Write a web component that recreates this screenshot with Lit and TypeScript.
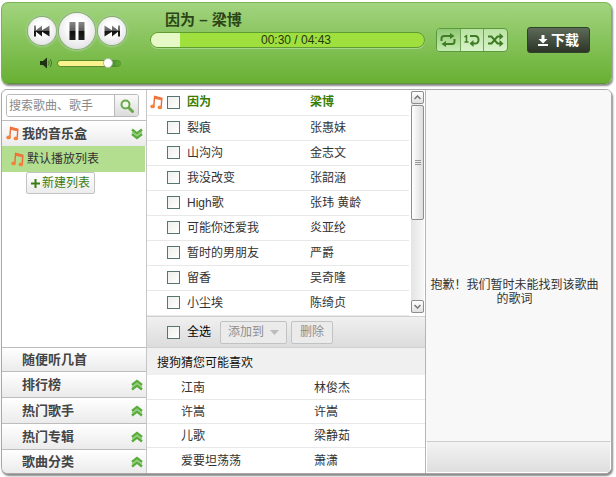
import { LitElement, html, svg, css } from "lit";
import { customElement, state } from "lit/decorators.js";
import { classMap } from "lit/directives/class-map.js";
import { styleMap } from "lit/directives/style-map.js";

interface Song {
  title: string;
  artist: string;
}

const SONGS: Song[] = [
  { title: "因为", artist: "梁博" },
  { title: "裂痕", artist: "张惠妹" },
  { title: "山沟沟", artist: "金志文" },
  { title: "我没改变", artist: "张韶涵" },
  { title: "High歌", artist: "张玮 黄龄" },
  { title: "可能你还爱我", artist: "炎亚纶" },
  { title: "暂时的男朋友", artist: "严爵" },
  { title: "留香", artist: "吴奇隆" },
  { title: "小尘埃", artist: "陈绮贞" },
];

const SUGGESTED: Song[] = [
  { title: "江南", artist: "林俊杰" },
  { title: "许嵩", artist: "许嵩" },
  { title: "儿歌", artist: "梁静茹" },
  { title: "爱要坦荡荡", artist: "萧潇" },
];

const CHANNELS = ["排行榜", "热门歌手", "热门专辑", "歌曲分类"];

const noteIcon = html`<svg class="note" width="14" height="15" viewBox="0 0 14 15" aria-hidden="true">
  <path d="M3.8 11.4 L4.6 1.5 L11.8 3.4 L11.2 12" fill="none" stroke="#ee6a34" stroke-width="1.4" />
  <path d="M4.4 1.2 L12.3 3.2 L12.1 5.6 L4.3 3.7 Z" fill="#f0753f" />
  <ellipse cx="2.6" cy="11.4" rx="2.3" ry="1.9" fill="#f4823f" />
  <ellipse cx="9.9" cy="12.4" rx="2.3" ry="1.9" fill="#f4823f" />
</svg>`;

const chevrons = (down: boolean) => html`<svg class="chevrons" width="12" height="12" viewBox="0 0 12 12" aria-hidden="true">
  ${down
    ? svg`<path d="M1 1.5 L6 5.5 L11 1.5 M1 6 L6 10 L11 6" fill="none" stroke="#58ac3b" stroke-width="2.4" /><path d="M1 3.6 L6 7.6 L11 3.6" fill="none" stroke="#8fca76" stroke-width="1.4" />`
    : svg`<path d="M1 6 L6 2 L11 6 M1 10.5 L6 6.5 L11 10.5" fill="none" stroke="#58ac3b" stroke-width="2.4" /><path d="M1 8.2 L6 4.2 L11 8.2" fill="none" stroke="#8fca76" stroke-width="1.4" />`}
</svg>`;

const glyphGradient = svg`<defs><linearGradient id="g" x1="0" y1="0" x2="0" y2="1">
  <stop offset="0" stop-color="#888" /><stop offset=".48" stop-color="#5c5c5c" />
  <stop offset=".52" stop-color="#111" /><stop offset="1" stop-color="#222" />
</linearGradient></defs>`;

@customElement("app-root")
export class AppRoot extends LitElement {
  @state() private elapsed = 30;
  @state() private duration = 283;
  @state() private current = 0;

  static styles = css`
    :host {
      display: block;
      box-sizing: border-box;
      padding: 2px 4px 4px 1px;
      font: 12px/16px "Liberation Sans", "Noto Sans CJK SC", sans-serif;
      color: #333;
      background: #fff;
    }
    * {
      box-sizing: border-box;
    }
    button,
    input {
      font: inherit;
      color: inherit;
      margin: 0;
      padding: 0;
    }
    button {
      border: 0;
      background: none;
      cursor: pointer;
    }
    svg {
      display: block;
      flex: none;
    }
    h1,
    h2,
    p {
      margin: 0;
      font-size: inherit;
      font-weight: inherit;
    }

    .player {
      display: flex;
      height: 82px;
      padding: 0 21px 0 26px;
      border: 1px solid #7cb45a;
      border-bottom-color: #5e9137;
      border-radius: 7px;
      background: linear-gradient(#a2d47f, #68b033);
      box-shadow: 1px 2px 2px #888;
    }
    .transport {
      width: 98px;
      margin-right: 24px;
      padding-top: 8px;
    }
    .keys {
      display: flex;
      align-items: center;
      justify-content: space-between;
      height: 40px;
    }
    .key {
      display: grid;
      place-items: center;
      width: 28px;
      height: 28px;
      border-radius: 50%;
      background: radial-gradient(circle at 50% 40%, #fff 30%, #dcdce0 90%);
      box-shadow: 0 0 0 1px #86aa75, 0 0 2px 2px #a5cf8d;
    }
    .key.main {
      width: 36px;
      height: 36px;
    }
    .volume {
      display: flex;
      align-items: center;
      gap: 4px;
      height: 12px;
      margin: 6px 5px 0 12px;
    }
    .volume input {
      appearance: none;
      flex: 1;
      min-width: 0;
      height: 12px;
      background: none;
    }
    .volume input::-webkit-slider-runnable-track {
      height: 7px;
      border: 1px solid #588c2f;
      border-radius: 4px;
      background: linear-gradient(90deg, #f9f38e 82%, #2f8a1e 82%, #5fae36);
    }
    .volume input::-webkit-slider-thumb {
      appearance: none;
      width: 10px;
      height: 10px;
      margin-top: -3px;
      border: 1px solid #b5b9a8;
      border-radius: 50%;
      background: #fff;
    }
    .now {
      flex: 1;
      min-width: 0;
      padding-top: 7px;
    }
    .now h1 {
      padding-left: 15px;
      font-size: 15px;
      line-height: 20px;
      font-weight: bold;
      color: #2b4518;
    }
    .progress {
      display: grid;
      height: 16px;
      margin-top: 2px;
      border: 1px solid #5f9c33;
      border-radius: 8px;
      background: #9fe03f;
      box-shadow: 0 1px 0 #a8d68c;
      overflow: hidden;
    }
    .played,
    .time {
      grid-area: 1 / 1;
    }
    .played {
      background: #e6f8c6;
    }
    .time {
      padding-left: 17px;
      line-height: 14px;
      text-align: center;
      color: #23380f;
    }
    .modes {
      display: flex;
      width: 72px;
      height: 24px;
      margin: 25px 19px 0 11px;
      border: 1px solid #5a9a3d;
      border-radius: 4px;
      background: linear-gradient(#b9e3a2, #d9f3cb);
      overflow: hidden;
    }
    .modes button {
      display: grid;
      place-items: center;
      flex: 1;
    }
    .modes button + button {
      border-left: 1px solid #6fa956;
    }
    .modes .on {
      background: linear-gradient(#8fc873, #c5eab0);
    }
    .download {
      display: flex;
      align-items: center;
      justify-content: center;
      gap: 3px;
      width: 63px;
      height: 26px;
      margin-top: 24px;
      border: 1px solid #2e4426;
      border-radius: 3px;
      background: linear-gradient(#5d6a58, #2c3528);
      font-size: 14px;
      font-weight: bold;
      color: #fff;
    }

    .panels {
      display: grid;
      grid-template-columns: 145px 279px 1fr;
      margin-top: 5px;
      border: 1px solid #a9a9a9;
      border-radius: 6px 6px 7px 7px;
      background: #fff;
      box-shadow: 1px 2px 2px #888;
      overflow: hidden;
    }

    .side {
      display: flex;
      flex-direction: column;
      border-right: 1px solid #c6c6c6;
    }
    .search {
      display: flex;
      height: 23px;
      margin: 4px 7px 3px 4px;
      border: 1px solid #b9b9b9;
      border-radius: 3px;
      overflow: hidden;
    }
    .search input {
      flex: 1;
      min-width: 0;
      padding: 0 2px;
      border: 0;
      outline: 0;
      background: #fff;
    }
    .search input::placeholder {
      color: #8a8a8a;
    }
    .search button {
      display: grid;
      place-items: center;
      width: 24px;
      border-left: 1px solid #b9b9b9;
      background: linear-gradient(#fafafa, #dcdcdc);
    }
    .bar {
      display: flex;
      align-items: center;
      height: 26px;
      padding: 0 3px 0 20px;
      border-top: 1px solid #bdbdbd;
      background: linear-gradient(#fff, #ebebeb);
      font-size: 13px;
      font-weight: bold;
      color: #444;
      text-align: left;
    }
    .bar.open {
      padding-left: 4px;
    }
    .bar .chevrons {
      margin-left: auto;
    }
    .bar .note,
    .playlist .note {
      margin-right: 2px;
    }
    .playlist {
      display: flex;
      align-items: center;
      height: 26px;
      margin-right: 1px;
      padding-left: 9px;
      background: #b3de90;
    }
    .create {
      align-self: flex-start;
      display: flex;
      align-items: center;
      gap: 2px;
      height: 22px;
      margin-left: 24px;
      padding: 0 4px;
      border: 1px solid #c4c4c4;
      border-radius: 2px;
      background: linear-gradient(#fff, #ececec);
      color: #3b7d12;
    }
    .channels {
      display: flex;
      flex-direction: column;
      margin-top: auto;
    }
    .channels .short,
    .channels .bar:last-child {
      height: 24px;
    }

    .list {
      border-right: 1px solid #b5b5b5;
      min-width: 0;
    }
    .scroller {
      display: flex;
      height: 226px;
    }
    table {
      flex: 1;
      width: 100%;
      table-layout: fixed;
      border-collapse: collapse;
    }
    td {
      height: 25px;
      padding: 0;
      border-bottom: 1px solid #e8e8e8;
      white-space: nowrap;
    }
    .mark {
      width: 20px;
    }
    .mark .note {
      margin-left: 3px;
    }
    .tick {
      width: 20px;
    }
    .title {
      width: 123px;
    }
    input[type="checkbox"] {
      appearance: none;
      display: block;
      width: 13px;
      height: 13px;
      border: 1px solid #55756f;
      background: linear-gradient(135deg, #eef0ec, #fff);
    }
    .current .title,
    .current .artist {
      font-weight: bold;
      color: #3a7d00;
    }
    .scrollbar {
      display: flex;
      flex-direction: column;
      gap: 1px;
      width: 13px;
      height: 222px;
      margin: 1px 1px 0 2px;
      background: linear-gradient(90deg, #e4e4e4, #f7f7f7);
    }
    .scrollbar button {
      display: grid;
      place-items: center;
      height: 13px;
      border: 1px solid #8d8d8d;
      border-radius: 2px;
      background: linear-gradient(#fff, #e0e0e0);
    }
    .thumb {
      display: grid;
      place-items: center;
      flex: none;
      height: 115px;
      border: 1px solid #8d8d8d;
      border-radius: 2px;
      background: linear-gradient(90deg, #fff, #dcdcdc);
    }
    .track {
      flex: 1;
    }
    .tools {
      display: flex;
      align-items: center;
      height: 32px;
      padding-left: 20px;
      border: 1px solid #d0d0d0;
      border-width: 1px 0;
      background: linear-gradient(#f0f0f0, #dcdcdc);
    }
    .tools label {
      display: flex;
      align-items: center;
      gap: 7px;
      margin-right: 9px;
      color: #000;
    }
    .tools button {
      display: flex;
      align-items: center;
      gap: 6px;
      height: 23px;
      margin-right: 4px;
      padding: 0 7px;
      border: 1px solid #c2c2c2;
      border-radius: 2px;
      background: #ebebeb;
      color: #8e8e8e;
    }
    .tools .plain {
      padding: 0 8px;
    }
    .guess {
      height: 27px;
      padding-left: 10px;
      background: #f0f0f0;
      line-height: 30px;
      color: #111;
    }
    .suggested td {
      height: 24px;
      padding: 2px 0 0 34px;
    }
    .suggested td + td {
      padding-left: 0;
    }
    .suggested tr:last-child td {
      height: 26px;
      border-bottom: 0;
    }
    .suggested .name {
      width: 167px;
    }

    .lyrics {
      display: flex;
      flex-direction: column;
      min-width: 0;
      background: #f8f8f8;
    }
    .lyrics p {
      flex: 1;
      display: grid;
      align-content: center;
      padding: 52px 8px 0 0;
      line-height: 14px;
      text-align: center;
    }
    .foot {
      height: 32px;
      border: 1px solid #fff;
      border-top-color: #ccc;
      background: linear-gradient(#f3f3f3, #dedede);
    }
  `;

  private clock(seconds: number) {
    const pad = (n: number) => String(n).padStart(2, "0");
    return `${pad(Math.floor(seconds / 60))}:${pad(seconds % 60)}`;
  }

  private renderPlayer() {
    const song = SONGS[this.current];
    return html`<header class="player">
      <div class="transport">
        <div class="keys">
          <button class="key" aria-label="上一首">
            <svg width="18" height="12" viewBox="0 0 18 12">${glyphGradient}<path fill="url(#g)" d="M1 .5h2v4.7L9 .5v4.7L16.5.5v11L9 6.8v4.7L3 6.8v4.7H1z" /></svg>
          </button>
          <button class="key main" aria-label="暂停">
            <svg width="16" height="18" viewBox="0 0 16 18">${glyphGradient}<path fill="url(#g)" d="M.5 0h6v18h-6zM9.5 0h6v18h-6z" /></svg>
          </button>
          <button class="key" aria-label="下一首">
            <svg width="18" height="12" viewBox="0 0 18 12">${glyphGradient}<path fill="url(#g)" d="M17 .5h-2v4.7L9 .5v4.7L1.5.5v11L9 6.8v4.7L15 6.8v4.7h2z" /></svg>
          </button>
        </div>
        <div class="volume">
          <svg width="13" height="12" viewBox="0 0 13 12" aria-hidden="true">
            <path d="M0 4h3l4-3.5v11L3 8H0z" fill="#1f3312" />
            <path d="M8.5 3.8q1.6 2.2 0 4.4M10.2 2q3 4 0 8" fill="none" stroke="#4a7331" />
          </svg>
          <input type="range" min="0" max="100" value="86" aria-label="音量" />
        </div>
      </div>
      <div class="now">
        <h1>${song.title} – ${song.artist}</h1>
        <div class="progress">
          <div class="played" style=${styleMap({ width: `${(this.elapsed / this.duration) * 100}%` })}></div>
          <div class="time">${this.clock(this.elapsed)} / ${this.clock(this.duration)}</div>
        </div>
      </div>
      <div class="modes">
        <button class="on" aria-label="列表循环">
          <svg width="16" height="14" viewBox="0 0 16 14"><path d="M1.5 8V5.500Q1.500 3 4 3h7M14.500 6v2.500q0 2.500-2.500 2.500H5" fill="none" stroke="#3f7c24" stroke-width="2" /><path d="M10 0l4.500 3L10 6zM6 8l-4.500 3L6 14z" fill="#3f7c24" /></svg>
        </button>
        <button aria-label="单曲循环">
          <svg width="16" height="14" viewBox="0 0 16 14"><path d="M.5 4L2.500 2.800V9M.5 9h4" fill="none" stroke="#3f7c24" stroke-width="1.500" /><path d="M6 3h5q3.500 0 3.500 3.800T11 10.500H8" fill="none" stroke="#3f7c24" stroke-width="2" /><path d="M9.500 7v7L5.500 10.500z" fill="#3f7c24" /></svg>
        </button>
        <button aria-label="随机播放">
          <svg width="16" height="14" viewBox="0 0 16 14"><path d="M0 3.500h3.500l6 7H13M0 10.500h3.500l6-7H13" fill="none" stroke="#3f7c24" stroke-width="2" /><path d="M11.500 0l4 3.500-4 3.500zM11.500 7l4 3.500-4 3.500z" fill="#3f7c24" /></svg>
        </button>
      </div>
      <button class="download">
        <svg width="10" height="11" viewBox="0 0 10 11" aria-hidden="true"><path d="M3.500 0h3v4h3L5 8.500.5 4h3zM0 9h10v2H0z" fill="#fff" /></svg>下载
      </button>
    </header>`;
  }

  private renderSide() {
    return html`<nav class="side">
      <form class="search" @submit=${(e: Event) => e.preventDefault()}>
        <input type="text" placeholder="搜索歌曲、歌手" aria-label="搜索歌曲、歌手" />
        <button aria-label="搜索">
          <svg width="14" height="14" viewBox="0 0 14 14"><path d="M8.500 8.500l4 4" stroke="#6aa84a" stroke-width="3" stroke-linecap="round" /><circle cx="5.500" cy="5.500" r="4" fill="#eef8e8" stroke="#6aa84a" stroke-width="2" /></svg>
        </button>
      </form>
      <button class="bar open">${noteIcon}我的音乐盒${chevrons(true)}</button>
      <button class="playlist">${noteIcon}默认播放列表</button>
      <button class="create">
        <svg width="9" height="9" viewBox="0 0 9 9" aria-hidden="true"><path d="M4.500 0v9M0 4.500h9" stroke="#3b7d12" stroke-width="2" /></svg>新建列表
      </button>
      <div class="channels">
        <button class="bar short">随便听几首</button>
        ${CHANNELS.map((name) => html`<button class="bar">${name}${chevrons(false)}</button>`)}
      </div>
    </nav>`;
  }

  private renderList() {
    return html`<section class="list">
      <div class="scroller">
        <table>
          <colgroup><col class="mark" /><col class="tick" /><col class="title" /><col /></colgroup>
          <tbody>
            ${SONGS.map((song, i) => html`<tr class=${classMap({ current: i === this.current })}>
              <td class="mark">${i === this.current ? noteIcon : ""}</td>
              <td><input type="checkbox" aria-label=${song.title} /></td>
              <td class="title">${song.title}</td>
              <td class="artist">${song.artist}</td>
            </tr>`)}
          </tbody>
        </table>
        <div class="scrollbar">
          <button aria-label="向上滚动"><svg width="7" height="5" viewBox="0 0 7 5"><path d="M.5 4l3-3 3 3" fill="none" stroke="#777" stroke-width="1.500" /></svg></button>
          <div class="thumb"><svg width="6" height="5" viewBox="0 0 6 5"><path d="M0 .5h6M0 2.500h6M0 4.500h6" stroke="#999" /></svg></div>
          <div class="track"></div>
          <button aria-label="向下滚动"><svg width="7" height="5" viewBox="0 0 7 5"><path d="M.5 1l3 3 3-3" fill="none" stroke="#777" stroke-width="1.500" /></svg></button>
        </div>
      </div>
      <div class="tools">
        <label><input type="checkbox" />全选</label>
        <button>添加到<svg width="9" height="5" viewBox="0 0 9 5" aria-hidden="true"><path d="M0 0h9L4.500 5z" fill="#bbb" /></svg></button>
        <button class="plain">删除</button>
      </div>
      <h2 class="guess">搜狗猜您可能喜欢</h2>
      <table class="suggested">
        <colgroup><col class="name" /><col /></colgroup>
        <tbody>
          ${SUGGESTED.map((song) => html`<tr><td>${song.title}</td><td>${song.artist}</td></tr>`)}
        </tbody>
      </table>
    </section>`;
  }

  render() {
    return html`${this.renderPlayer()}
      <main class="panels">
        ${this.renderSide()} ${this.renderList()}
        <section class="lyrics">
          <p>抱歉！我们暂时未能找到该歌曲的歌词</p>
          <div class="foot"></div>
        </section>
      </main>`;
  }
}
